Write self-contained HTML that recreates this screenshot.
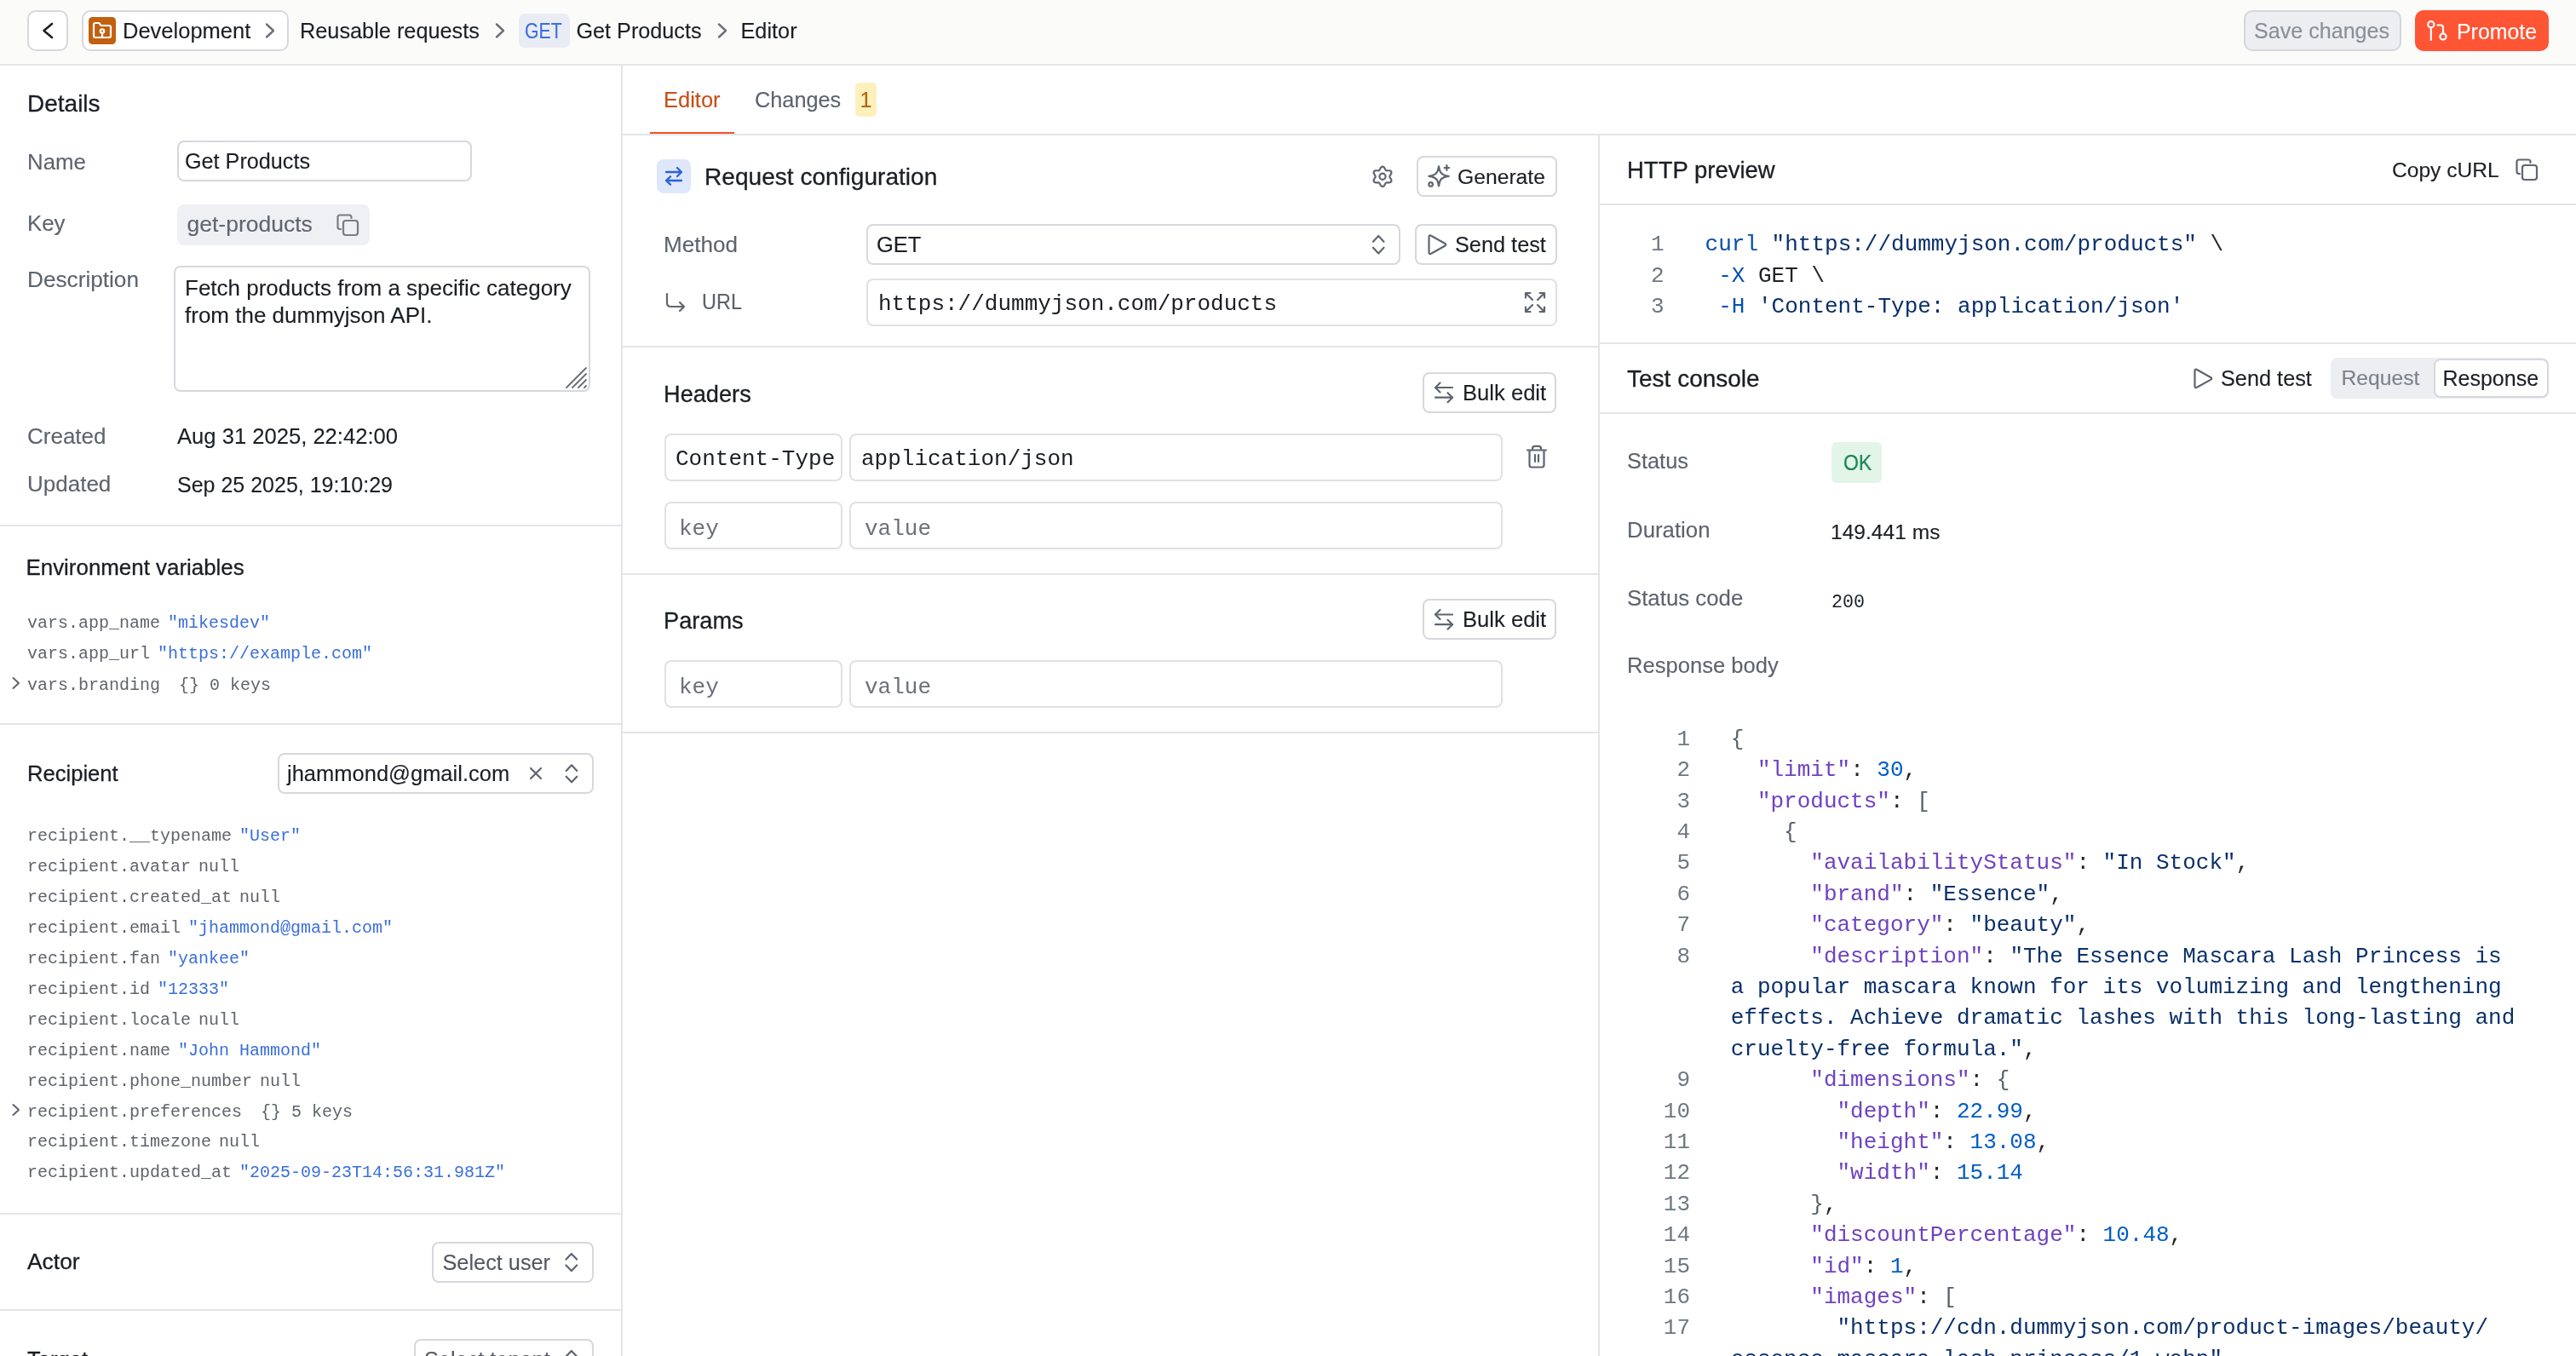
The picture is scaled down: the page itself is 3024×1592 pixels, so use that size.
<!DOCTYPE html>
<html><head><meta charset="utf-8"><title>Editor</title>
<style>
html,body{margin:0;padding:0;}
body{width:3024px;height:1592px;overflow:hidden;position:relative;background:#ffffff;font-family:"Liberation Sans", sans-serif;}
.t{position:absolute;white-space:pre;}
.s{font-family:"Liberation Sans", sans-serif;}
.m{font-family:"Liberation Mono", monospace;}
.s{-webkit-text-stroke:0.12px currentColor;}
.t.md{-webkit-text-stroke:0.3px currentColor;}
.b{position:absolute;box-sizing:border-box;}
.i{position:absolute;overflow:visible;}
#root{position:absolute;left:0;top:0;width:3024px;height:1592px;will-change:transform;}
</style></head><body>
<div id="root">
<div class="b" style="left:0.0px;top:0.0px;width:3024.0px;height:75.0px;background:#fbfbfa;"></div>
<div class="b" style="left:0.0px;top:75.0px;width:3024.0px;height:2.0px;background:#e4e5e9;"></div>
<div class="b" style="left:32.0px;top:12.0px;width:48.0px;height:48.0px;background:#fff;border:2px solid #d6d8dd;border-radius:10px;"></div>
<svg class="i" style="left:40px;top:20px;" width="32" height="32" viewBox="40 20 32 32" fill="none" stroke-linecap="round" stroke-linejoin="round"><path d="M61 28 L51.5 36 L61 44" stroke="#1b1f24" stroke-width="2.6"/></svg>
<div class="b" style="left:96.0px;top:12.0px;width:243.0px;height:48.0px;background:#fff;border:2px solid #d6d8dd;border-radius:10px;"></div>
<svg class="i" style="left:104px;top:20px;" width="32" height="32" viewBox="104 20 32 32" fill="none" stroke-linecap="round" stroke-linejoin="round"><rect x="104" y="20" width="32" height="32" rx="4.5" fill="#c2600f" stroke="none"/><path d="M110 29 Q110 27 112 27 H116.5 L118.5 30 H128 Q130 30 130 32 V42 Q130 44 128 44 H112 Q110 44 110 42 Z" stroke="#fff" stroke-width="2.2"/><circle cx="120" cy="36.6" r="2.2" stroke="#fff" stroke-width="2.2"/><path d="M120 38.8 V44" stroke="#fff" stroke-width="2.2"/></svg>
<div class="t s " style="left:144.0px;top:19.96px;font-size:25.5px;line-height:33px;color:#1b1f24;">Development</div>
<svg class="i" style="left:310px;top:24px;" width="16" height="24" viewBox="310 24 16 24" fill="none" stroke-linecap="round" stroke-linejoin="round"><path d="M313 28.5 L321 36 L313 43.5" stroke="#6b7079" stroke-width="2.4"/></svg>
<div class="t s " style="left:352.0px;top:20.03px;font-size:25.3px;line-height:33px;color:#1b1f24;">Reusable requests</div>
<svg class="i" style="left:580px;top:24px;" width="16" height="24" viewBox="580 24 16 24" fill="none" stroke-linecap="round" stroke-linejoin="round"><path d="M583 28.5 L591 36 L583 43.5" stroke="#6b7079" stroke-width="2.4"/></svg>
<div class="b" style="left:609.0px;top:16.0px;width:60.0px;height:40.0px;background:#e9ecf4;border-radius:7px;"></div>
<div class="t s " style="left:615.6px;top:20.03px;font-size:25.3px;line-height:33px;color:#3b6fd8;transform:scaleX(0.84);transform-origin:0 0;">GET</div>
<div class="t s " style="left:676.5px;top:20.06px;font-size:25.2px;line-height:33px;color:#1b1f24;">Get Products</div>
<svg class="i" style="left:841px;top:24px;" width="16" height="24" viewBox="841 24 16 24" fill="none" stroke-linecap="round" stroke-linejoin="round"><path d="M844 28.5 L852 36 L844 43.5" stroke="#6b7079" stroke-width="2.4"/></svg>
<div class="t s " style="left:869.5px;top:20.03px;font-size:25.3px;line-height:33px;color:#1b1f24;">Editor</div>
<div class="b" style="left:2634.0px;top:12.0px;width:185.0px;height:48.0px;background:#eceef1;border:2px solid #d3d6db;border-radius:10px;"></div>
<div class="t s " style="left:2646.0px;top:20.10px;font-size:25.1px;line-height:33px;color:#8a8f98;">Save changes</div>
<div class="b" style="left:2835.0px;top:12.0px;width:157.0px;height:48.0px;background:#fe5535;border-radius:10px;"></div>
<svg class="i" style="left:2845px;top:22px;" width="32" height="30" viewBox="2845 22 32 30" fill="none" stroke-linecap="round" stroke-linejoin="round"><circle cx="2853.8" cy="28.8" r="3.6" stroke="#fff" stroke-width="2.2"/><path d="M2853.8 32.6 V47" stroke="#fff" stroke-width="2.2"/><circle cx="2868" cy="43" r="3.6" stroke="#fff" stroke-width="2.2"/><path d="M2868 39.2 V32.5 Q2868 29.5 2865 29.5 H2861.5" stroke="#fff" stroke-width="2.2"/></svg>
<div class="t s " style="left:2884.0px;top:20.67px;font-size:24.9px;line-height:32px;color:#ffffff;">Promote</div>
<div class="b" style="left:729.0px;top:77.0px;width:2.0px;height:1515.0px;background:#e4e5e9;"></div>
<div class="t s md" style="left:32.0px;top:104.29px;font-size:28px;line-height:36px;color:#1b1f24;">Details</div>
<div class="t s " style="left:32.0px;top:172.66px;font-size:25.8px;line-height:34px;color:#5d636e;">Name</div>
<div class="b" style="left:208.0px;top:165.0px;width:346.0px;height:48.0px;background:#fff;border:2px solid #d6d8dd;border-radius:8px;"></div>
<div class="t s " style="left:217.0px;top:173.36px;font-size:25.2px;line-height:33px;color:#1b1f24;">Get Products</div>
<div class="t s " style="left:32.0px;top:244.56px;font-size:25.8px;line-height:34px;color:#5d636e;">Key</div>
<div class="b" style="left:208.0px;top:240.0px;width:226.0px;height:48.0px;background:#eef0f3;border-radius:8px;"></div>
<div class="t s " style="left:219.5px;top:245.81px;font-size:26.5px;line-height:34px;color:#5f6570;">get-products</div>
<svg class="i" style="left:394px;top:250px;" width="28" height="28" viewBox="394 250 28 28" fill="none" stroke-linecap="round" stroke-linejoin="round"><rect x="403.0" y="259.0" width="17.0" height="17.0" rx="3.0" stroke="#777c84" stroke-width="2.2"/><path d="M400.0 269.0 H399.0 Q396.5 269.0 396.5 266.5 V255.0 Q396.5 252.5 399.0 252.5 H410.0 Q412.5 252.5 412.5 255.0 V256.0" stroke="#777c84" stroke-width="2.2"/></svg>
<div class="t s " style="left:32.0px;top:310.92px;font-size:26.2px;line-height:34px;color:#5d636e;">Description</div>
<div class="b" style="left:204.0px;top:312.0px;width:489.0px;height:148.0px;background:#fff;border:2px solid #d6d8dd;border-radius:8px;"></div>
<div class="t s " style="left:217.0px;top:321.49px;font-size:26.0px;line-height:34px;color:#1b1f24;">Fetch products from a specific category</div>
<div class="t s " style="left:217.0px;top:353.49px;font-size:26.0px;line-height:34px;color:#1b1f24;">from the dummyjson API.</div>
<svg class="i" style="left:660px;top:428px;" width="32" height="32" viewBox="660 428 32 32" fill="none" stroke-linecap="round" stroke-linejoin="round"><path d="M665 455 L688 432 M672 455 L688 439 M679 455 L688 446 M686 455 L688 453" stroke="#6b7078" stroke-width="1.9"/></svg>
<div class="t s " style="left:32.0px;top:495.29px;font-size:26px;line-height:34px;color:#5d636e;">Created</div>
<div class="t s " style="left:208.0px;top:495.92px;font-size:25.6px;line-height:33px;color:#1b1f24;">Aug 31 2025, 22:42:00</div>
<div class="t s " style="left:32.0px;top:551.29px;font-size:26px;line-height:34px;color:#5d636e;">Updated</div>
<div class="t s " style="left:208.0px;top:552.63px;font-size:25.0px;line-height:32px;color:#1b1f24;">Sep 25 2025, 19:10:29</div>
<div class="b" style="left:0.0px;top:616.0px;width:729.0px;height:2.0px;background:#e4e5e9;"></div>
<div class="t s md" style="left:30.5px;top:649.32px;font-size:25.9px;line-height:34px;color:#1b1f24;">Environment variables</div>
<div class="t m " style="left:32.0px;top:718.68px;font-size:20.0px;line-height:26px;color:#5f646b;">vars.app_name</div>
<div class="t m " style="left:197.0px;top:718.68px;font-size:20.0px;line-height:26px;color:#3a6fd9;">"mikesdev"</div>
<div class="t m " style="left:32.0px;top:755.18px;font-size:20.0px;line-height:26px;color:#5f646b;">vars.app_url</div>
<div class="t m " style="left:185.0px;top:755.18px;font-size:20.0px;line-height:26px;color:#3a6fd9;">"https://example.com"</div>
<div class="t m " style="left:32.0px;top:791.68px;font-size:20.0px;line-height:26px;color:#5f646b;">vars.branding</div>
<div class="t m " style="left:210.0px;top:791.68px;font-size:20.0px;line-height:26px;color:#5f646b;">{} 0 keys</div>
<svg class="i" style="left:12px;top:790px;" width="16" height="20" viewBox="12 790 16 20" fill="none" stroke-linecap="round" stroke-linejoin="round"><path d="M15.5 796 L22 802 L15.5 808" stroke="#5f646b" stroke-width="2"/></svg>
<div class="b" style="left:0.0px;top:849.0px;width:729.0px;height:2.0px;background:#e4e5e9;"></div>
<div class="t s md" style="left:32.0px;top:892.12px;font-size:25.6px;line-height:33px;color:#1b1f24;">Recipient</div>
<div class="b" style="left:326.0px;top:884.0px;width:371.0px;height:48.0px;background:#fff;border:2px solid #d6d8dd;border-radius:8px;"></div>
<div class="t s " style="left:337.0px;top:892.16px;font-size:25.5px;line-height:33px;color:#1b1f24;">jhammond@gmail.com</div>
<svg class="i" style="left:618px;top:895px;" width="22" height="22" viewBox="618 895 22 22" fill="none" stroke-linecap="round" stroke-linejoin="round"><path d="M623 902 L635 914 M635 902 L623 914" stroke="#5f6570" stroke-width="2.2"/></svg>
<svg class="i" style="left:660px;top:894px;" width="24" height="30" viewBox="660 894 24 30" fill="none" stroke-linecap="round" stroke-linejoin="round"><path d="M664.7 904.9 L671 898.3 L677.3 904.9" stroke="#5f6570" stroke-width="2.2"/><path d="M664.7 911.6999999999999 L671 918.3 L677.3 911.6999999999999" stroke="#5f6570" stroke-width="2.2"/></svg>
<div class="t m " style="left:32.0px;top:969.08px;font-size:20.0px;line-height:26px;color:#5f646b;">recipient.__typename</div>
<div class="t m " style="left:281.0px;top:969.08px;font-size:20.0px;line-height:26px;color:#3a6fd9;">"User"</div>
<div class="t m " style="left:32.0px;top:1005.02px;font-size:20.0px;line-height:26px;color:#5f646b;">recipient.avatar</div>
<div class="t m " style="left:233.0px;top:1005.02px;font-size:20.0px;line-height:26px;color:#5f646b;">null</div>
<div class="t m " style="left:32.0px;top:1040.96px;font-size:20.0px;line-height:26px;color:#5f646b;">recipient.created_at</div>
<div class="t m " style="left:281.0px;top:1040.96px;font-size:20.0px;line-height:26px;color:#5f646b;">null</div>
<div class="t m " style="left:32.0px;top:1076.90px;font-size:20.0px;line-height:26px;color:#5f646b;">recipient.email</div>
<div class="t m " style="left:221.0px;top:1076.90px;font-size:20.0px;line-height:26px;color:#3a6fd9;">"jhammond@gmail.com"</div>
<div class="t m " style="left:32.0px;top:1112.84px;font-size:20.0px;line-height:26px;color:#5f646b;">recipient.fan</div>
<div class="t m " style="left:197.0px;top:1112.84px;font-size:20.0px;line-height:26px;color:#3a6fd9;">"yankee"</div>
<div class="t m " style="left:32.0px;top:1148.78px;font-size:20.0px;line-height:26px;color:#5f646b;">recipient.id</div>
<div class="t m " style="left:185.0px;top:1148.78px;font-size:20.0px;line-height:26px;color:#3a6fd9;">"12333"</div>
<div class="t m " style="left:32.0px;top:1184.72px;font-size:20.0px;line-height:26px;color:#5f646b;">recipient.locale</div>
<div class="t m " style="left:233.0px;top:1184.72px;font-size:20.0px;line-height:26px;color:#5f646b;">null</div>
<div class="t m " style="left:32.0px;top:1220.66px;font-size:20.0px;line-height:26px;color:#5f646b;">recipient.name</div>
<div class="t m " style="left:209.0px;top:1220.66px;font-size:20.0px;line-height:26px;color:#3a6fd9;">"John Hammond"</div>
<div class="t m " style="left:32.0px;top:1256.60px;font-size:20.0px;line-height:26px;color:#5f646b;">recipient.phone_number</div>
<div class="t m " style="left:305.0px;top:1256.60px;font-size:20.0px;line-height:26px;color:#5f646b;">null</div>
<div class="t m " style="left:32.0px;top:1292.54px;font-size:20.0px;line-height:26px;color:#5f646b;">recipient.preferences</div>
<div class="t m " style="left:306.0px;top:1292.54px;font-size:20.0px;line-height:26px;color:#5f646b;">{} 5 keys</div>
<svg class="i" style="left:12px;top:1290.86px;" width="16" height="20" viewBox="12 1290.86 16 20" fill="none" stroke-linecap="round" stroke-linejoin="round"><path d="M15.5 1296.86 L22 1302.86 L15.5 1308.86" stroke="#5f646b" stroke-width="2"/></svg>
<div class="t m " style="left:32.0px;top:1328.48px;font-size:20.0px;line-height:26px;color:#5f646b;">recipient.timezone</div>
<div class="t m " style="left:257.0px;top:1328.48px;font-size:20.0px;line-height:26px;color:#5f646b;">null</div>
<div class="t m " style="left:32.0px;top:1364.42px;font-size:20.0px;line-height:26px;color:#5f646b;">recipient.updated_at</div>
<div class="t m " style="left:281.0px;top:1364.42px;font-size:20.0px;line-height:26px;color:#3a6fd9;">"2025-09-23T14:56:31.981Z"</div>
<div class="b" style="left:0.0px;top:1424.0px;width:729.0px;height:2.0px;background:#e4e5e9;"></div>
<div class="t s md" style="left:32.0px;top:1464.35px;font-size:26.4px;line-height:34px;color:#1b1f24;">Actor</div>
<div class="b" style="left:507.0px;top:1458.0px;width:190.0px;height:48.0px;background:#fff;border:2px solid #d6d8dd;border-radius:8px;"></div>
<div class="t s " style="left:519.5px;top:1465.93px;font-size:25.3px;line-height:33px;color:#535861;">Select user</div>
<svg class="i" style="left:658px;top:1466px;" width="26" height="32" viewBox="658 1466 26 32" fill="none" stroke-linecap="round" stroke-linejoin="round"><path d="M664.5 1478.6 L670.8 1472 L677.0999999999999 1478.6" stroke="#5f6570" stroke-width="2.2"/><path d="M664.5 1485.4 L670.8 1492 L677.0999999999999 1485.4" stroke="#5f6570" stroke-width="2.2"/></svg>
<div class="b" style="left:0.0px;top:1537.0px;width:729.0px;height:2.0px;background:#e4e5e9;"></div>
<div class="t s md" style="left:32.0px;top:1579.62px;font-size:25.6px;line-height:33px;color:#1b1f24;">Target</div>
<div class="b" style="left:486.0px;top:1572.0px;width:211.0px;height:48.0px;background:#fff;border:2px solid #d6d8dd;border-radius:8px;"></div>
<div class="t s " style="left:498.0px;top:1580.23px;font-size:25.3px;line-height:33px;color:#535861;">Select tenant</div>
<svg class="i" style="left:658px;top:1580px;" width="26" height="32" viewBox="658 1580 26 32" fill="none" stroke-linecap="round" stroke-linejoin="round"><path d="M664.5 1592.6 L670.8 1586 L677.0999999999999 1592.6" stroke="#5f6570" stroke-width="2.2"/><path d="M664.5 1599.4 L670.8 1606 L677.0999999999999 1599.4" stroke="#5f6570" stroke-width="2.2"/></svg>
<div class="b" style="left:1876.0px;top:157.0px;width:2.0px;height:1435.0px;background:#e4e5e9;"></div>
<div class="t s " style="left:779.0px;top:100.66px;font-size:25.5px;line-height:33px;color:#c94d16;">Editor</div>
<div class="b" style="left:763.0px;top:155.0px;width:99.0px;height:2.2px;background:#f5522a;"></div>
<div class="t s " style="left:886.0px;top:100.73px;font-size:25.3px;line-height:33px;color:#5d636e;">Changes</div>
<div class="b" style="left:1004.0px;top:97.0px;width:25.0px;height:40.0px;background:#fcf0bd;border-radius:5px;"></div>
<div class="t s " style="left:1009.5px;top:101.33px;font-size:25.0px;line-height:32px;color:#b3660c;">1</div>
<div class="b" style="left:731.0px;top:157.0px;width:2293.0px;height:2.0px;background:#e4e5e9;"></div>
<div class="b" style="left:771.0px;top:187.0px;width:40.0px;height:40.0px;background:#dfe7fb;border-radius:8px;"></div>
<svg class="i" style="left:776px;top:192px;" width="30" height="30" viewBox="776 192 30 30" fill="none" stroke-linecap="round" stroke-linejoin="round"><path d="M782 202 H800 M795 197 L800 202 L795 207" stroke="#2a62d9" stroke-width="2.3"/><path d="M800 212 H782 M787 207.3 L782 212 L787 216.7" stroke="#2a62d9" stroke-width="2.3"/></svg>
<div class="t s md" style="left:827.0px;top:189.36px;font-size:28.1px;line-height:37px;color:#1b1f24;">Request configuration</div>
<svg class="i" style="left:1605px;top:188px;" width="36" height="38" viewBox="1605 188 36 38" fill="none" stroke-linecap="round" stroke-linejoin="round"><path d="M1623.00 195.60 L1623.61 195.70 L1624.19 195.99 L1624.72 196.44 L1625.19 197.00 L1625.59 197.64 L1625.93 198.29 L1626.23 198.90 L1626.51 199.42 L1626.81 199.83 L1627.15 200.11 L1627.57 200.27 L1628.07 200.32 L1628.66 200.31 L1629.34 200.26 L1630.07 200.23 L1630.82 200.26 L1631.55 200.38 L1632.20 200.61 L1632.74 200.97 L1633.13 201.45 L1633.35 202.03 L1633.39 202.67 L1633.27 203.36 L1633.01 204.05 L1632.66 204.71 L1632.27 205.33 L1631.89 205.89 L1631.58 206.40 L1631.37 206.86 L1631.30 207.30 L1631.37 207.74 L1631.58 208.20 L1631.89 208.71 L1632.27 209.27 L1632.66 209.89 L1633.01 210.55 L1633.27 211.24 L1633.39 211.93 L1633.35 212.57 L1633.13 213.15 L1632.74 213.63 L1632.20 213.99 L1631.55 214.22 L1630.82 214.34 L1630.07 214.37 L1629.34 214.34 L1628.66 214.29 L1628.07 214.28 L1627.57 214.33 L1627.15 214.49 L1626.81 214.77 L1626.51 215.18 L1626.23 215.70 L1625.93 216.31 L1625.59 216.96 L1625.19 217.60 L1624.72 218.16 L1624.19 218.61 L1623.61 218.90 L1623.00 219.00 L1622.39 218.90 L1621.81 218.61 L1621.28 218.16 L1620.81 217.60 L1620.41 216.96 L1620.07 216.31 L1619.77 215.70 L1619.49 215.18 L1619.19 214.77 L1618.85 214.49 L1618.43 214.33 L1617.93 214.28 L1617.34 214.29 L1616.66 214.34 L1615.93 214.37 L1615.18 214.34 L1614.45 214.22 L1613.80 213.99 L1613.26 213.63 L1612.87 213.15 L1612.65 212.57 L1612.61 211.93 L1612.73 211.24 L1612.99 210.55 L1613.34 209.89 L1613.73 209.27 L1614.11 208.71 L1614.42 208.20 L1614.63 207.74 L1614.70 207.30 L1614.63 206.86 L1614.42 206.40 L1614.11 205.89 L1613.73 205.33 L1613.34 204.71 L1612.99 204.05 L1612.73 203.36 L1612.61 202.67 L1612.65 202.03 L1612.87 201.45 L1613.26 200.97 L1613.80 200.61 L1614.45 200.38 L1615.18 200.26 L1615.93 200.23 L1616.66 200.26 L1617.34 200.31 L1617.93 200.32 L1618.43 200.27 L1618.85 200.11 L1619.19 199.83 L1619.49 199.42 L1619.77 198.90 L1620.07 198.29 L1620.41 197.64 L1620.81 197.00 L1621.28 196.44 L1621.81 195.99 L1622.39 195.70 L1623.00 195.60 Z" stroke="#5f6570" stroke-width="2.2"/><circle cx="1623" cy="207.3" r="3.6" stroke="#5f6570" stroke-width="2.2"/></svg>
<div class="b" style="left:1663.0px;top:183.0px;width:165.0px;height:48.0px;background:#fff;border:2px solid #d6d8dd;border-radius:8px;"></div>
<svg class="i" style="left:1668px;top:188px;" width="40" height="40" viewBox="1668 188 40 40" fill="none" stroke-linecap="round" stroke-linejoin="round"><path d="M1689 195.4 Q1690.2 202.3 1692.3 203.5 Q1693.5 205.60000000000002 1700.6 206.8 Q1693.5 208.0 1692.3 210.10000000000002 Q1690.2 211.3 1689 218.20000000000002 Q1687.8 211.3 1685.7 210.10000000000002 Q1684.5 208.0 1677.4 206.8 Q1684.5 205.60000000000002 1685.7 203.5 Q1687.8 202.3 1689 195.4 Z" stroke="#5f6570" stroke-width="2.3"/><path d="M1698.4 194.20000000000002 V199.8 M1695.6 197.0 H1701.2" stroke="#5f6570" stroke-width="2.2"/><circle cx="1679.6" cy="216.4" r="2.3" stroke="#5f6570" stroke-width="2.2"/></svg>
<div class="t s " style="left:1711.0px;top:191.94px;font-size:24.7px;line-height:32px;color:#1b1f24;">Generate</div>
<div class="t s " style="left:779.0px;top:270.25px;font-size:26.1px;line-height:34px;color:#5d636e;">Method</div>
<div class="b" style="left:1017.0px;top:263.0px;width:627.0px;height:48.0px;background:#fff;border:2px solid #d6d8dd;border-radius:8px;"></div>
<div class="t s " style="left:1029.0px;top:270.96px;font-size:25.5px;line-height:33px;color:#1b1f24;">GET</div>
<svg class="i" style="left:1604px;top:270px;" width="28" height="34" viewBox="1604 270 28 34" fill="none" stroke-linecap="round" stroke-linejoin="round"><path d="M1611.9 283.765 L1618.2 277 L1624.5 283.765" stroke="#5f6570" stroke-width="2.2"/><path d="M1611.9 290.735 L1618.2 297.5 L1624.5 290.735" stroke="#5f6570" stroke-width="2.2"/></svg>
<div class="b" style="left:1660.5px;top:263.0px;width:167.5px;height:48.0px;background:#fff;border:2px solid #d6d8dd;border-radius:8px;"></div>
<svg class="i" style="left:1672px;top:270px;" width="30" height="34" viewBox="1672 270 30 34" fill="none" stroke-linecap="round" stroke-linejoin="round"><path d="M1677.5 278.0 Q1677.5 275.5 1680.0 276.7 L1696.5 286.05 Q1698 287.25 1696.5 288.45 L1680.0 297.8 Q1677.5 299 1677.5 296.5 Z" stroke="#5f6570" stroke-width="2.2"/></svg>
<div class="t s " style="left:1708.0px;top:270.73px;font-size:25.3px;line-height:33px;color:#1b1f24;">Send test</div>
<svg class="i" style="left:776px;top:340px;" width="32" height="30" viewBox="776 340 32 30" fill="none" stroke-linecap="round" stroke-linejoin="round"><path d="M783 345 V355.5 Q783 360 787.5 360 H803 M798 355 L803 360 L798 365" stroke="#5f6570" stroke-width="2.2"/></svg>
<div class="t s " style="left:823.5px;top:338.36px;font-size:25.5px;line-height:33px;color:#5d636e;transform:scaleX(0.92);transform-origin:0 0;">URL</div>
<div class="b" style="left:1017.0px;top:327.0px;width:811.0px;height:56.0px;background:#fff;border:2px solid #dfe1e5;border-radius:8px;"></div>
<div class="t m " style="left:1031.0px;top:339.78px;font-size:26px;line-height:34px;color:#1b1f24;">https://dummyjson.com/products</div>
<svg class="i" style="left:1786px;top:339px;" width="32" height="32" viewBox="1786 339 32 32" fill="none" stroke-linecap="round" stroke-linejoin="round"><path d="M1791 344 L1799 352 M1791 344 H1796.5 M1791 344 V349.5" stroke="#5f6570" stroke-width="2.2"/><path d="M1813 344 L1805 352 M1813 344 H1807.5 M1813 344 V349.5" stroke="#5f6570" stroke-width="2.2"/><path d="M1791 366 L1799 358 M1791 366 H1796.5 M1791 366 V360.5" stroke="#5f6570" stroke-width="2.2"/><path d="M1813 366 L1805 358 M1813 366 H1807.5 M1813 366 V360.5" stroke="#5f6570" stroke-width="2.2"/></svg>
<div class="b" style="left:731.0px;top:406.0px;width:1145.0px;height:2.0px;background:#e4e5e9;"></div>
<div class="t s md" style="left:779.0px;top:444.57px;font-size:27.2px;line-height:35px;color:#1b1f24;">Headers</div>
<div class="b" style="left:1669.5px;top:437.0px;width:157.5px;height:48.0px;background:#fff;border:2px solid #d6d8dd;border-radius:8px;"></div>
<svg class="i" style="left:1680px;top:445px;" width="30" height="32" viewBox="1680 445 30 32" fill="none" stroke-linecap="round" stroke-linejoin="round"><path d="M1705 455 H1685" stroke="#5f6570" stroke-width="2.2"/><path d="M1690.5 449.5 L1685 455 L1690.5 460.5" stroke="#5f6570" stroke-width="2.2"/><path d="M1685 466.7 H1705" stroke="#5f6570" stroke-width="2.2"/><path d="M1699.5 461.2 L1705 466.7 L1699.5 472.2" stroke="#5f6570" stroke-width="2.2"/></svg>
<div class="t s " style="left:1717.0px;top:444.62px;font-size:25.6px;line-height:33px;color:#1b1f24;">Bulk edit</div>
<div class="b" style="left:779.5px;top:509.0px;width:209.2px;height:56.0px;background:#fff;border:2px solid #dfe1e5;border-radius:8px;"></div>
<div class="b" style="left:997.3px;top:509.0px;width:766.7px;height:56.0px;background:#fff;border:2px solid #dfe1e5;border-radius:8px;"></div>
<div class="t m " style="left:793.0px;top:521.88px;font-size:26px;line-height:34px;color:#1b1f24;">Content-Type</div>
<div class="t m " style="left:1011.0px;top:521.88px;font-size:26px;line-height:34px;color:#1b1f24;">application/json</div>
<svg class="i" style="left:1788px;top:520px;" width="32" height="32" viewBox="1788 520 32 32" fill="none" stroke-linecap="round" stroke-linejoin="round"><path d="M1793 528.5 H1815 M1799 528.5 V526.5 Q1799 523.8 1801.7 523.8 H1806.3 Q1809 523.8 1809 526.5 V528.5" stroke="#5f6570" stroke-width="2.2"/><path d="M1795.5 529 V546 Q1795.5 548.5 1798 548.5 H1810 Q1812.5 548.5 1812.5 546 V529" stroke="#5f6570" stroke-width="2.2"/><path d="M1802 534 V542 M1806 534 V542" stroke="#5f6570" stroke-width="2.2"/></svg>
<div class="b" style="left:779.5px;top:589.0px;width:209.2px;height:56.0px;background:#fff;border:2px solid #dfe1e5;border-radius:8px;"></div>
<div class="b" style="left:997.3px;top:589.0px;width:766.7px;height:56.0px;background:#fff;border:2px solid #dfe1e5;border-radius:8px;"></div>
<div class="t m " style="left:797.0px;top:604.38px;font-size:26px;line-height:34px;color:#6b7079;">key</div>
<div class="t m " style="left:1015.0px;top:604.38px;font-size:26px;line-height:34px;color:#6b7079;">value</div>
<div class="b" style="left:731.0px;top:673.0px;width:1145.0px;height:2.0px;background:#e4e5e9;"></div>
<div class="t s md" style="left:779.0px;top:711.07px;font-size:27.2px;line-height:35px;color:#1b1f24;">Params</div>
<div class="b" style="left:1669.5px;top:703.0px;width:157.5px;height:48.0px;background:#fff;border:2px solid #d6d8dd;border-radius:8px;"></div>
<svg class="i" style="left:1680px;top:711px;" width="30" height="32" viewBox="1680 711 30 32" fill="none" stroke-linecap="round" stroke-linejoin="round"><path d="M1705 721.5 H1685" stroke="#5f6570" stroke-width="2.2"/><path d="M1690.5 716.0 L1685 721.5 L1690.5 727.0" stroke="#5f6570" stroke-width="2.2"/><path d="M1685 733.2 H1705" stroke="#5f6570" stroke-width="2.2"/><path d="M1699.5 727.7 L1705 733.2 L1699.5 738.7" stroke="#5f6570" stroke-width="2.2"/></svg>
<div class="t s " style="left:1717.0px;top:711.12px;font-size:25.6px;line-height:33px;color:#1b1f24;">Bulk edit</div>
<div class="b" style="left:779.5px;top:775.0px;width:209.2px;height:56.0px;background:#fff;border:2px solid #dfe1e5;border-radius:8px;"></div>
<div class="b" style="left:997.3px;top:775.0px;width:766.7px;height:56.0px;background:#fff;border:2px solid #dfe1e5;border-radius:8px;"></div>
<div class="t m " style="left:797.0px;top:790.08px;font-size:26px;line-height:34px;color:#6b7079;">key</div>
<div class="t m " style="left:1015.0px;top:790.08px;font-size:26px;line-height:34px;color:#6b7079;">value</div>
<div class="b" style="left:731.0px;top:859.0px;width:1145.0px;height:2.0px;background:#e4e5e9;"></div>
<div class="t s md" style="left:1910.0px;top:182.17px;font-size:27.5px;line-height:36px;color:#1b1f24;">HTTP preview</div>
<div class="t s " style="left:2808.0px;top:183.97px;font-size:24.6px;line-height:32px;color:#1b1f24;">Copy cURL</div>
<svg class="i" style="left:2950px;top:184px;" width="32" height="32" viewBox="2950 184 32 32" fill="none" stroke-linecap="round" stroke-linejoin="round"><rect x="2961.0" y="194.0" width="17.0" height="17.0" rx="3.0" stroke="#5f6570" stroke-width="2.2"/><path d="M2958.0 204.0 H2957.0 Q2954.5 204.0 2954.5 201.5 V190.0 Q2954.5 187.5 2957.0 187.5 H2968.0 Q2970.5 187.5 2970.5 190.0 V191.0" stroke="#5f6570" stroke-width="2.2"/></svg>
<div class="b" style="left:1878.0px;top:239.0px;width:1146.0px;height:2.0px;background:#e4e5e9;"></div>
<div class="t m " style="left:1938.0px;top:270.08px;font-size:26px;line-height:34px;color:#6e7781;">1</div>
<div class="t m " style="left:1938.0px;top:306.58px;font-size:26px;line-height:34px;color:#6e7781;">2</div>
<div class="t m " style="left:1938.0px;top:343.08px;font-size:26px;line-height:34px;color:#6e7781;">3</div>
<div class="t m " style="left:2001.6px;top:270.08px;font-size:26px;line-height:34px;color:#1f2328;"><span style="color:#0550ae">curl</span><span style="color:#0a3069"> "https://dummyjson.com/products"</span><span style="color:#1f2328"> \</span></div>
<div class="t m " style="left:2001.6px;top:306.58px;font-size:26px;line-height:34px;color:#1f2328;"><span style="color:#0550ae"> -X</span><span style="color:#1f2328"> GET \</span></div>
<div class="t m " style="left:2001.6px;top:343.08px;font-size:26px;line-height:34px;color:#1f2328;"><span style="color:#0550ae"> -H</span><span style="color:#0a3069"> 'Content-Type: application/json'</span></div>
<div class="b" style="left:1878.0px;top:402.0px;width:1146.0px;height:2.0px;background:#e4e5e9;"></div>
<div class="t s md" style="left:1910.0px;top:427.29px;font-size:28px;line-height:36px;color:#1b1f24;">Test console</div>
<svg class="i" style="left:2570px;top:428px;" width="32" height="32" viewBox="2570 428 32 32" fill="none" stroke-linecap="round" stroke-linejoin="round"><path d="M2576.5 435.3 Q2576.5 432.8 2579.0 434.0 L2595.5 443.2 Q2597 444.4 2595.5 445.59999999999997 L2579.0 454.8 Q2576.5 456 2576.5 453.5 Z" stroke="#5f6570" stroke-width="2.2"/></svg>
<div class="t s " style="left:2607.0px;top:427.53px;font-size:25.3px;line-height:33px;color:#1b1f24;">Send test</div>
<div class="b" style="left:2736.0px;top:420.0px;width:256.0px;height:48.0px;background:#eceef2;border-radius:8px;"></div>
<div class="t s " style="left:2748.5px;top:428.44px;font-size:24.7px;line-height:32px;color:#7b818b;">Request</div>
<div class="b" style="left:2857.0px;top:421.0px;width:134.5px;height:46.0px;background:#fff;border:2px solid #d6d8dd;border-radius:8px;"></div>
<div class="t s " style="left:2867.5px;top:428.33px;font-size:25.0px;line-height:32px;color:#1b1f24;">Response</div>
<div class="b" style="left:1878.0px;top:484.0px;width:1146.0px;height:2.0px;background:#e4e5e9;"></div>
<div class="t s " style="left:1910.0px;top:525.49px;font-size:25.4px;line-height:33px;color:#5d636e;">Status</div>
<div class="b" style="left:2150.0px;top:519.0px;width:59.0px;height:47.5px;background:#e2f5e8;border-radius:6px;"></div>
<div class="t s " style="left:2163.5px;top:526.73px;font-size:25.0px;line-height:32px;color:#10804a;transform:scaleX(0.92);transform-origin:0 0;">OK</div>
<div class="t s " style="left:1910.0px;top:605.06px;font-size:25.8px;line-height:34px;color:#5d636e;">Duration</div>
<div class="t s " style="left:2149.0px;top:608.87px;font-size:24.6px;line-height:32px;color:#1b1f24;">149.441 ms</div>
<div class="t s " style="left:1910.0px;top:684.76px;font-size:25.8px;line-height:34px;color:#5d636e;">Status code</div>
<div class="t m " style="left:2150.0px;top:693.83px;font-size:21.7px;line-height:28px;color:#1b1f24;">200</div>
<div class="t s " style="left:1910.0px;top:764.92px;font-size:25.6px;line-height:33px;color:#5d636e;">Response body</div>
<div class="t m " style="left:1968.4px;top:850.88px;font-size:26px;line-height:34px;color:#6e7781;">1</div>
<div class="t m " style="left:2031.7px;top:850.88px;font-size:26px;line-height:34px;color:#1f2328;"><span style="color:#57606a">{</span></div>
<div class="t m " style="left:1968.4px;top:887.28px;font-size:26px;line-height:34px;color:#6e7781;">2</div>
<div class="t m " style="left:2031.7px;top:887.28px;font-size:26px;line-height:34px;color:#1f2328;"><span style="color:#1f2328">  </span><span style="color:#6f42c1">"limit"</span><span style="color:#1f2328">: </span><span style="color:#005cc5">30</span><span style="color:#1f2328">,</span></div>
<div class="t m " style="left:1968.4px;top:923.68px;font-size:26px;line-height:34px;color:#6e7781;">3</div>
<div class="t m " style="left:2031.7px;top:923.68px;font-size:26px;line-height:34px;color:#1f2328;"><span style="color:#1f2328">  </span><span style="color:#6f42c1">"products"</span><span style="color:#1f2328">: </span><span style="color:#57606a">[</span></div>
<div class="t m " style="left:1968.4px;top:960.08px;font-size:26px;line-height:34px;color:#6e7781;">4</div>
<div class="t m " style="left:2031.7px;top:960.08px;font-size:26px;line-height:34px;color:#1f2328;"><span style="color:#1f2328">    </span><span style="color:#57606a">{</span></div>
<div class="t m " style="left:1968.4px;top:996.48px;font-size:26px;line-height:34px;color:#6e7781;">5</div>
<div class="t m " style="left:2031.7px;top:996.48px;font-size:26px;line-height:34px;color:#1f2328;"><span style="color:#1f2328">      </span><span style="color:#6f42c1">"availabilityStatus"</span><span style="color:#1f2328">: </span><span style="color:#0a3069">"In Stock"</span><span style="color:#1f2328">,</span></div>
<div class="t m " style="left:1968.4px;top:1032.88px;font-size:26px;line-height:34px;color:#6e7781;">6</div>
<div class="t m " style="left:2031.7px;top:1032.88px;font-size:26px;line-height:34px;color:#1f2328;"><span style="color:#1f2328">      </span><span style="color:#6f42c1">"brand"</span><span style="color:#1f2328">: </span><span style="color:#0a3069">"Essence"</span><span style="color:#1f2328">,</span></div>
<div class="t m " style="left:1968.4px;top:1069.28px;font-size:26px;line-height:34px;color:#6e7781;">7</div>
<div class="t m " style="left:2031.7px;top:1069.28px;font-size:26px;line-height:34px;color:#1f2328;"><span style="color:#1f2328">      </span><span style="color:#6f42c1">"category"</span><span style="color:#1f2328">: </span><span style="color:#0a3069">"beauty"</span><span style="color:#1f2328">,</span></div>
<div class="t m " style="left:1968.4px;top:1105.68px;font-size:26px;line-height:34px;color:#6e7781;">8</div>
<div class="t m " style="left:2031.7px;top:1105.68px;font-size:26px;line-height:34px;color:#1f2328;"><span style="color:#1f2328">      </span><span style="color:#6f42c1">"description"</span><span style="color:#1f2328">: </span><span style="color:#0a3069">"The Essence Mascara Lash Princess is</span></div>
<div class="t m " style="left:2031.7px;top:1142.08px;font-size:26px;line-height:34px;color:#1f2328;"><span style="color:#0a3069">a popular mascara known for its volumizing and lengthening</span></div>
<div class="t m " style="left:2031.7px;top:1178.48px;font-size:26px;line-height:34px;color:#1f2328;"><span style="color:#0a3069">effects. Achieve dramatic lashes with this long-lasting and</span></div>
<div class="t m " style="left:2031.7px;top:1214.88px;font-size:26px;line-height:34px;color:#1f2328;"><span style="color:#0a3069">cruelty-free formula."</span><span style="color:#1f2328">,</span></div>
<div class="t m " style="left:1968.4px;top:1251.28px;font-size:26px;line-height:34px;color:#6e7781;">9</div>
<div class="t m " style="left:2031.7px;top:1251.28px;font-size:26px;line-height:34px;color:#1f2328;"><span style="color:#1f2328">      </span><span style="color:#6f42c1">"dimensions"</span><span style="color:#1f2328">: </span><span style="color:#57606a">{</span></div>
<div class="t m " style="left:1952.8px;top:1287.68px;font-size:26px;line-height:34px;color:#6e7781;">10</div>
<div class="t m " style="left:2031.7px;top:1287.68px;font-size:26px;line-height:34px;color:#1f2328;"><span style="color:#1f2328">        </span><span style="color:#6f42c1">"depth"</span><span style="color:#1f2328">: </span><span style="color:#005cc5">22.99</span><span style="color:#1f2328">,</span></div>
<div class="t m " style="left:1952.8px;top:1324.08px;font-size:26px;line-height:34px;color:#6e7781;">11</div>
<div class="t m " style="left:2031.7px;top:1324.08px;font-size:26px;line-height:34px;color:#1f2328;"><span style="color:#1f2328">        </span><span style="color:#6f42c1">"height"</span><span style="color:#1f2328">: </span><span style="color:#005cc5">13.08</span><span style="color:#1f2328">,</span></div>
<div class="t m " style="left:1952.8px;top:1360.48px;font-size:26px;line-height:34px;color:#6e7781;">12</div>
<div class="t m " style="left:2031.7px;top:1360.48px;font-size:26px;line-height:34px;color:#1f2328;"><span style="color:#1f2328">        </span><span style="color:#6f42c1">"width"</span><span style="color:#1f2328">: </span><span style="color:#005cc5">15.14</span></div>
<div class="t m " style="left:1952.8px;top:1396.88px;font-size:26px;line-height:34px;color:#6e7781;">13</div>
<div class="t m " style="left:2031.7px;top:1396.88px;font-size:26px;line-height:34px;color:#1f2328;"><span style="color:#1f2328">      </span><span style="color:#57606a">}</span><span style="color:#1f2328">,</span></div>
<div class="t m " style="left:1952.8px;top:1433.28px;font-size:26px;line-height:34px;color:#6e7781;">14</div>
<div class="t m " style="left:2031.7px;top:1433.28px;font-size:26px;line-height:34px;color:#1f2328;"><span style="color:#1f2328">      </span><span style="color:#6f42c1">"discountPercentage"</span><span style="color:#1f2328">: </span><span style="color:#005cc5">10.48</span><span style="color:#1f2328">,</span></div>
<div class="t m " style="left:1952.8px;top:1469.68px;font-size:26px;line-height:34px;color:#6e7781;">15</div>
<div class="t m " style="left:2031.7px;top:1469.68px;font-size:26px;line-height:34px;color:#1f2328;"><span style="color:#1f2328">      </span><span style="color:#6f42c1">"id"</span><span style="color:#1f2328">: </span><span style="color:#005cc5">1</span><span style="color:#1f2328">,</span></div>
<div class="t m " style="left:1952.8px;top:1506.08px;font-size:26px;line-height:34px;color:#6e7781;">16</div>
<div class="t m " style="left:2031.7px;top:1506.08px;font-size:26px;line-height:34px;color:#1f2328;"><span style="color:#1f2328">      </span><span style="color:#6f42c1">"images"</span><span style="color:#1f2328">: </span><span style="color:#57606a">[</span></div>
<div class="t m " style="left:1952.8px;top:1542.48px;font-size:26px;line-height:34px;color:#6e7781;">17</div>
<div class="t m " style="left:2031.7px;top:1542.48px;font-size:26px;line-height:34px;color:#1f2328;"><span style="color:#1f2328">        </span><span style="color:#0a3069">"https://cdn.dummyjson.com/product-images/beauty/</span></div>
<div class="t m " style="left:2031.7px;top:1578.88px;font-size:26px;line-height:34px;color:#1f2328;"><span style="color:#0a3069">essence-mascara-lash-princess/1.webp"</span><span style="color:#1f2328">,</span></div>
</div>
<script>(function(){var w=window.innerWidth;if(w&&Math.abs(w-3024)>2){var k=w/3024;var r=document.getElementById("root");r.style.transformOrigin="0 0";r.style.transform="scale("+k+")";document.body.style.width=w+"px";document.body.style.height=(1592*k)+"px";}})();</script>
</body></html>
